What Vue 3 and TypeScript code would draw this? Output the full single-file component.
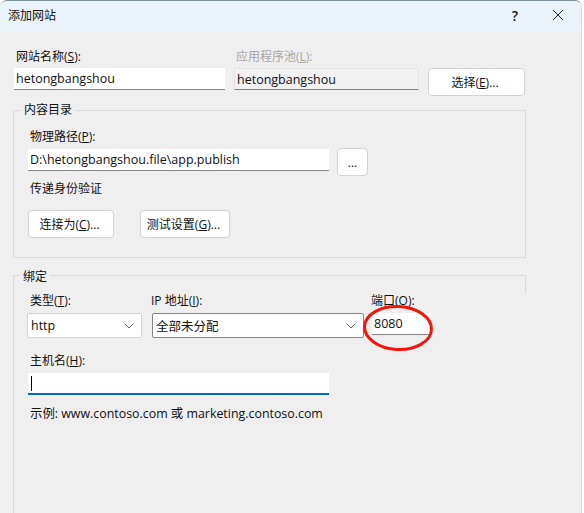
<template>
  <div class="dialog">
    <div class="titlebar">
      <span class="title">添加网站</span>
      <span class="help">?</span>
      <svg class="close" width="12" height="12" viewBox="0 0 12 12">
        <path d="M1 1 L11 11 M11 1 L1 11" stroke="#222" stroke-width="1" fill="none" />
      </svg>
    </div>

    <div class="body">
      <div class="site-row">
        <div class="field site-name">
          <label>网站名称(<u>S</u>):</label>
          <div class="input">hetongbangshou</div>
        </div>
        <div class="field pool">
          <label class="disabled">应用程序池(<u>L</u>):</label>
          <div class="input readonly">hetongbangshou</div>
        </div>
        <button class="btn select-btn">选择(<u>E</u>)...</button>
      </div>

      <fieldset class="group content-group">
        <legend>内容目录</legend>
        <label>物理路径(<u>P</u>):</label>
        <div class="path-row">
          <div class="input path">D:\hetongbangshou.file\app.publish</div>
          <button class="btn browse">...</button>
        </div>
        <div class="auth-label">传递身份验证</div>
        <div class="auth-row">
          <button class="btn connect">连接为(<u>C</u>)...</button>
          <button class="btn test">测试设置(<u>G</u>)...</button>
        </div>
      </fieldset>

      <div class="group binding-group">
        <div class="binding-frame">
          <span class="binding-legend">绑定</span>
        </div>
        <div class="binding-row">
          <div class="field type">
            <label>类型(<u>T</u>):</label>
            <div class="combo">
              http
              <svg width="10" height="6" viewBox="0 0 10 6"><path d="M0.5 0.5 L5 5 L9.5 0.5" stroke="#666" fill="none" /></svg>
            </div>
          </div>
          <div class="field ip">
            <label>IP 地址(<u>I</u>):</label>
            <div class="combo focus">
              全部未分配
              <svg width="10" height="6" viewBox="0 0 10 6"><path d="M0.5 0.5 L5 5 L9.5 0.5" stroke="#666" fill="none" /></svg>
            </div>
          </div>
          <div class="field port">
            <label>端口(<u>O</u>):</label>
            <div class="input">8080</div>
          </div>
        </div>
        <label class="host-label">主机名(<u>H</u>):</label>
        <div class="input host"><span class="caret"></span></div>
        <div class="example">示例: www.contoso.com 或 marketing.contoso.com</div>
      </div>
    </div>

    <svg class="circle" width="74" height="50" viewBox="0 0 74 50">
      <ellipse cx="37" cy="24" rx="33.5" ry="21.5" transform="rotate(3 37 24)" fill="none" stroke="#f5140a" stroke-width="3" />
    </svg>
  </div>
</template>

<script setup lang="ts">
</script>

<style>
html,
body {
  background: #fff;
}
</style>

<style scoped>
.dialog {
  position: relative;
  box-sizing: border-box;
  width: 582px;
  height: 513px;
  background: #efefef;
  border-top: 1px solid #7f929c;
  border-right: 1px solid #d8d8d8;
  border-top-left-radius: 7px;
  border-top-right-radius: 7px;
  overflow: hidden;
  font-family: "Open Sans", "Noto Sans CJK SC", sans-serif;
  font-size: 12px;
  color: #111;
}

.titlebar {
  box-sizing: border-box;
  display: flex;
  align-items: center;
  height: 30px;
  padding: 0 0 2px 8px;
  background: #e9f3f9;
}

.title {
  flex: 1;
}

.help {
  margin-right: 34px;
  font-size: 14px;
  font-weight: 600;
}

.close {
  margin-right: 17px;
}

.body {
  padding: 18px 0 0 14px;
}

label {
  display: block;
  line-height: 16px;
}

u {
  text-underline-offset: 1px;
}

.disabled {
  color: #a6a6a6;
}

.site-row {
  display: flex;
  align-items: flex-end;
}

.field label {
  margin-left: 2px;
  margin-bottom: 3px;
}

.input {
  box-sizing: border-box;
  height: 22px;
  padding-left: 2px;
  line-height: 21px;
  background: #fff;
  border-bottom: 1px solid #868686;
  font-size: 12.5px;
}

.readonly {
  background: #f2f2f2;
  border: 1px solid #e4e4e4;
  border-bottom-color: #868686;
  line-height: 21px;
}

.site-name {
  width: 211px;
  margin-right: 9px;
}

.pool {
  width: 185px;
  margin-right: 9px;
}

.btn {
  box-sizing: border-box;
  height: 28px;
  padding: 0 3px 0 0;
  background: #fff;
  border: 1px solid #d2d2d2;
  border-radius: 4px;
  font: inherit;
  color: inherit;
}

.select-btn {
  width: 97px;
  margin-bottom: -6px;
}

.group {
  box-sizing: border-box;
  width: 513px;
  margin: 0 0 0 -1px;
}

fieldset.group {
  height: 155px;
  margin-top: 13px;
  padding: 12px 14px 0 14px;
  border: 1px solid #d9d9d9;
  border-radius: 0;
}

legend {
  margin-left: -7px;
  padding: 0 3px;
  line-height: 14px;
}

.content-group label {
  margin: 0 0 4px 2px;
}

.path-row {
  display: flex;
  align-items: flex-start;
}

.path {
  width: 301px;
  margin-right: 8px;
}

.browse {
  width: 31px;
  margin-top: -1px;
  padding: 0;
}

.auth-label {
  margin: 5px 0 0 2px;
  line-height: 16px;
}

.auth-row {
  display: flex;
  margin-top: 13px;
}

.connect {
  width: 86px;
  margin-right: 26px;
}

.test {
  width: 90px;
}

.binding-group {
  position: relative;
  height: 240px;
  margin-top: 17px;
  padding: 18px 0 0 15px;
  border-left: 1px solid #d9d9d9;
}

.binding-frame {
  position: absolute;
  top: 0;
  left: 0;
  right: 0;
  height: 18px;
  border-top: 1px solid #d9d9d9;
  border-right: 1px solid #d9d9d9;
}

.binding-legend {
  position: absolute;
  top: -6px;
  left: 6px;
  padding: 0 3px;
  background: #efefef;
  line-height: 14px;
}

.binding-row {
  display: flex;
}

.binding-row .field label {
  margin-bottom: 4px;
}

.type {
  width: 115px;
  margin-left: -2px;
  margin-right: 10px;
}

.type label {
  margin-left: 3px;
}

.ip {
  width: 212px;
  margin-right: 8px;
}

.ip label,
.port label {
  margin-left: -1px;
}

.port {
  width: 59px;
}

.port .input {
  margin-top: 1px;
  height: 22px;
}

.combo {
  box-sizing: border-box;
  display: flex;
  align-items: center;
  justify-content: space-between;
  height: 25px;
  padding: 0 7px 0 3px;
  background: #fff;
  border: 1px solid #d4d4d4;
  border-radius: 2px;
  font-size: 12.5px;
}

.combo.focus {
  border-color: #868686;
}

.host-label {
  margin: 15px 0 4px 1px;
}

.host {
  display: flex;
  align-items: center;
  width: 301px;
  margin-left: -1px;
  padding-left: 3px;
  border-bottom: 2px solid #0067c0;
}

.caret {
  width: 1px;
  height: 15px;
  background: #000;
}

.example {
  margin: 11px 0 0 1px;
  line-height: 16px;
  font-size: 12.4px;
}

.circle {
  position: absolute;
  top: 303px;
  left: 361px;
}
</style>
